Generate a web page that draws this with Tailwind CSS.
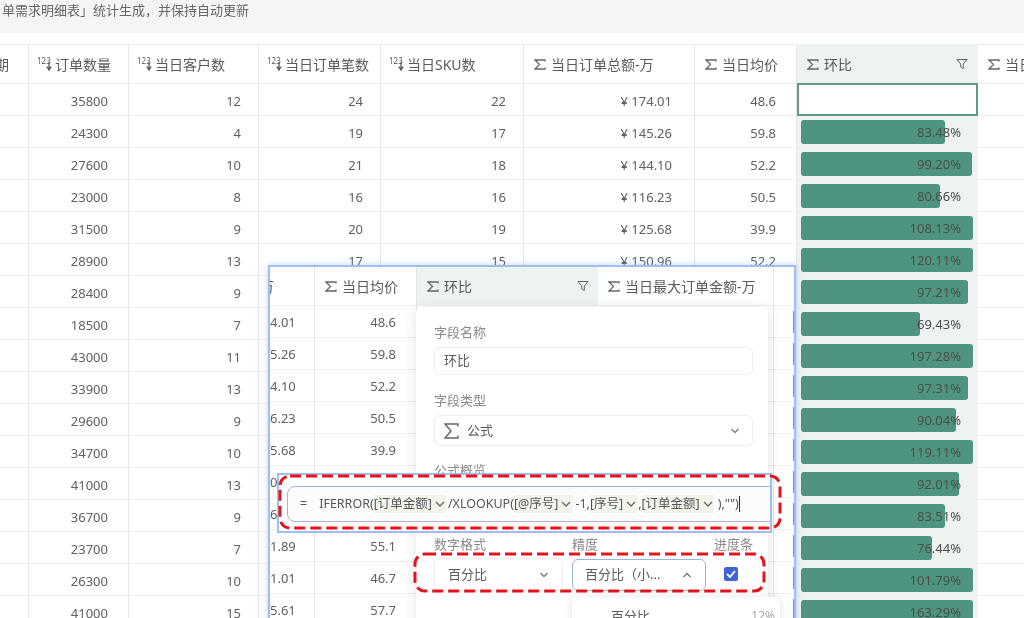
<!DOCTYPE html>
<html lang="zh-CN">
<head>
    <meta charset="UTF-8">
    <title>环比</title>
    <script src="https://cdn.jsdelivr.net/npm/@tailwindcss/browser@4"></script>
</head>
<body class="bg-white">
<div class="relative w-[1024px] h-[618px] overflow-hidden bg-white text-[13px] text-[#5f6160] blur-[0.35px] font-['Noto_Sans','Noto_Sans_CJK_SC',sans-serif]">

    <div class="h-[33px] bg-[#f5f5f5] pl-[2px] pt-[1px] text-[13px] text-[#666666] whitespace-nowrap">单需求明细表」统计生成，并保持自动更新</div>
    <div class="h-[11px] bg-white"></div>

    <!-- main table -->
    <div class="grid grid-cols-[29px_100px_130px_122px_143px_171px_102px_181px_46px] h-[40px] border-y border-[#eeeeee] text-[14px] text-[#5a5a5a]">
        <div class="flex items-center overflow-hidden border-r border-[#e6e6e6]"><span class="-ml-[5px]">期</span></div>
        <div class="flex items-center pl-[8px] border-r border-[#e6e6e6]"><span class="relative w-[18px] h-[14px] text-[8px] leading-[8px]">123<svg class="absolute left-[9px] top-[5px]" width="6" height="9" viewBox="0 0 6 9"><path d="M3 0v7M.8 4.500L3 8l2.200-3.500" fill="none" stroke="#555" stroke-width="1.300"/></svg></span><span>订单数量</span></div>
        <div class="flex items-center pl-[8px] border-r border-[#e6e6e6]"><span class="relative w-[18px] h-[14px] text-[8px] leading-[8px]">123<svg class="absolute left-[9px] top-[5px]" width="6" height="9" viewBox="0 0 6 9"><path d="M3 0v7M.8 4.500L3 8l2.200-3.500" fill="none" stroke="#555" stroke-width="1.300"/></svg></span><span>当日客户数</span></div>
        <div class="flex items-center pl-[8px] border-r border-[#e6e6e6]"><span class="relative w-[18px] h-[14px] text-[8px] leading-[8px]">123<svg class="absolute left-[9px] top-[5px]" width="6" height="9" viewBox="0 0 6 9"><path d="M3 0v7M.8 4.500L3 8l2.200-3.500" fill="none" stroke="#555" stroke-width="1.300"/></svg></span><span>当日订单笔数</span></div>
        <div class="flex items-center pl-[8px] border-r border-[#e6e6e6]"><span class="relative w-[18px] h-[14px] text-[8px] leading-[8px]">123<svg class="absolute left-[9px] top-[5px]" width="6" height="9" viewBox="0 0 6 9"><path d="M3 0v7M.8 4.500L3 8l2.200-3.500" fill="none" stroke="#555" stroke-width="1.300"/></svg></span><span>当日SKU数</span></div>
        <div class="flex items-center gap-[5px] pl-[10px] border-r border-[#e6e6e6]"><svg width="12" height="11" viewBox="0 0 12 11"><path d="M11 2.500V1H1l4.500 4.500L1 10h10V8.500" fill="none" stroke="#666" stroke-width="1.300"/></svg><span>当日订单总额-万</span></div>
        <div class="flex items-center gap-[5px] pl-[10px] border-r border-[#e6e6e6]"><svg width="12" height="11" viewBox="0 0 12 11"><path d="M11 2.500V1H1l4.500 4.500L1 10h10V8.500" fill="none" stroke="#666" stroke-width="1.300"/></svg><span>当日均价</span></div>
        <div class="flex items-center gap-[5px] pl-[10px] bg-[#ecf3f0] relative"><svg width="12" height="11" viewBox="0 0 12 11"><path d="M11 2.500V1H1l4.500 4.500L1 10h10V8.500" fill="none" stroke="#666" stroke-width="1.300"/></svg><span>环比</span>
            <svg class="absolute right-[10px] top-[13px]" width="12" height="12" viewBox="0 0 12 12"><path d="M1 1.500h10L7.300 6v4.500L4.700 9V6z" fill="none" stroke="#666" stroke-width="1"/></svg>
        </div>
        <div class="flex items-center gap-[5px] pl-[10px] whitespace-nowrap overflow-hidden"><svg class="shrink-0" width="12" height="11" viewBox="0 0 12 11"><path d="M11 2.500V1H1l4.500 4.500L1 10h10V8.500" fill="none" stroke="#666" stroke-width="1.300"/></svg><span>当日最大</span></div>
    </div>
    <div id="rows"></div>

    <!-- column editor window laid over the table -->
    <div class="absolute left-[268px] top-[265px] w-[528px] h-[360px] bg-white border-2 border-[#9cc0f5] shadow-[0_0_6px_rgba(120,160,230,0.45)] overflow-hidden">
        <div class="grid grid-cols-[45px_102px_181px_176px_21px] h-[39px] border-b border-[#eeeeee] text-[14px] text-[#5a5a5a]">
            <div class="flex items-center overflow-hidden border-r border-[#e6e6e6] whitespace-nowrap"><span class="-ml-[10px]">万</span></div>
            <div class="flex items-center gap-[5px] pl-[10px] border-r border-[#e6e6e6]"><svg width="12" height="11" viewBox="0 0 12 11"><path d="M11 2.500V1H1l4.500 4.500L1 10h10V8.500" fill="none" stroke="#666" stroke-width="1.300"/></svg><span>当日均价</span></div>
            <div class="flex items-center gap-[5px] pl-[10px] bg-[#ecf3f0] relative"><svg width="12" height="11" viewBox="0 0 12 11"><path d="M11 2.500V1H1l4.500 4.500L1 10h10V8.500" fill="none" stroke="#666" stroke-width="1.300"/></svg><span>环比</span>
                <svg class="absolute right-[9px] top-[13px]" width="12" height="12" viewBox="0 0 12 12"><path d="M1 1.500h10L7.300 6v4.500L4.700 9V6z" fill="none" stroke="#666" stroke-width="1"/></svg>
            </div>
            <div class="flex items-center gap-[5px] pl-[10px] border-r border-[#e6e6e6] whitespace-nowrap"><svg class="shrink-0" width="12" height="11" viewBox="0 0 12 11"><path d="M11 2.500V1H1l4.500 4.500L1 10h10V8.500" fill="none" stroke="#666" stroke-width="1.300"/></svg><span>当日最大订单金额-万</span></div>
            <div></div>
        </div>
        <div id="mini"></div>
    </div>

    <!-- field popover -->
    <div class="absolute left-[416px] top-[307px] w-[352px] h-[330px] bg-white rounded-[6px] shadow-[0_2px_14px_rgba(0,0,0,0.12)] px-[18px] pt-[17px]">
        <div class="text-[13px] leading-[16px] text-[#8a8a8a]">字段名称</div>
        <div class="mt-[7px] h-[28px] w-[319px] border border-[#eeeeee] rounded-[6px] flex items-center pl-[9px] text-[13px] text-[#5a5a5a]">环比</div>
        <div class="mt-[17px] text-[13px] leading-[16px] text-[#8a8a8a]">字段类型</div>
        <div class="mt-[7px] h-[31px] w-[319px] border border-[#eeeeee] rounded-[6px] flex items-center pl-[9px] pr-[12px] text-[13px] text-[#5a5a5a]">
            <svg width="15" height="16" viewBox="0 0 15 16"><path d="M14 3.500V1H1l6 7-6 7h13v-2.500" fill="none" stroke="#666" stroke-width="1.400"/></svg><span class="ml-[8px]">公式</span>
            <svg class="ml-auto" width="10" height="6" viewBox="0 0 10 6"><path d="M1.500 1l3.500 3.500L8.500 1" fill="none" stroke="#777" stroke-width="1.300"/></svg>
        </div>
        <div class="mt-[16px] text-[13px] leading-[16px] text-[#8a8a8a]">公式概览</div>
    </div>

    <!-- formula bar -->
    <div class="absolute left-[277px] top-[473px] w-[495px] h-[60px] bg-white border-2 border-[#9cc0f5] overflow-hidden pl-[8px] pt-[11px]">
        <div class="w-[520px] h-[36px] border border-[#9fb4dc] rounded-[8px] bg-[#fbfcfb] flex items-center pl-[12px] text-[12.5px] text-[#555555] whitespace-nowrap">
            <span class="mr-[12px]">=</span>
            <span>IFERROR(</span>
            <span class="flex items-center bg-[#f1f6ed] pr-[1px]">[订单金额]<svg class="ml-[3px]" width="10" height="6" viewBox="0 0 10 6"><path d="M1 1l4 4 4-4" fill="none" stroke="#666" stroke-width="1.300"/></svg></span>
            <span class="ml-[2px]">/XLOOKUP(</span>
            <span class="flex items-center bg-[#f1f6ed] pr-[1px]">[@序号]<svg class="ml-[3px]" width="10" height="6" viewBox="0 0 10 6"><path d="M1 1l4 4 4-4" fill="none" stroke="#666" stroke-width="1.300"/></svg></span>
            <span class="ml-[3px]">-1,</span>
            <span class="flex items-center bg-[#f1f6ed] pr-[1px]">[序号]<svg class="ml-[3px]" width="10" height="6" viewBox="0 0 10 6"><path d="M1 1l4 4 4-4" fill="none" stroke="#666" stroke-width="1.300"/></svg></span>
            <span class="ml-[1px]">,</span>
            <span class="flex items-center bg-[#f1f6ed] pr-[1px]">[订单金额]<svg class="ml-[3px]" width="10" height="6" viewBox="0 0 10 6"><path d="M1 1l4 4 4-4" fill="none" stroke="#666" stroke-width="1.300"/></svg></span>
            <span class="ml-[4px]">),"")</span>
            <span class="w-[1px] h-[16px] bg-[#333333]"></span>
        </div>
    </div>
    <svg class="absolute left-[278px] top-[474px]" width="504" height="56" viewBox="0 0 504 56"><rect x="2" y="2" width="500" height="52" rx="10" fill="none" stroke="#e4141a" stroke-width="3" stroke-dasharray="11 5"/></svg>

    <!-- number format row -->
    <div class="absolute left-[434px] top-[536px] w-[330px] h-[16px] text-[13px] leading-[16px] text-[#8a8a8a]">
        <span class="absolute left-0">数字格式</span><span class="absolute left-[138px]">精度</span><span class="absolute left-[280px]">进度条</span>
    </div>
    <div class="absolute left-[434px] top-[558px] flex items-center text-[13px] text-[#5a5a5a]">
        <div class="w-[129px] h-[33px] border border-[#eeeeee] rounded-[6px] flex items-center pl-[13px] pr-[13px]">百分比
            <svg class="ml-auto" width="10" height="6" viewBox="0 0 10 6"><path d="M1.500 1l3.500 3.500L8.500 1" fill="none" stroke="#777" stroke-width="1.300"/></svg>
        </div>
        <div class="ml-[9px] w-[134px] h-[32px] border border-[#9fb4dc] rounded-[6px] flex items-center pl-[12px] pr-[13px] whitespace-nowrap">百分比（小...
            <svg class="ml-auto" width="10" height="6" viewBox="0 0 10 6"><path d="M1.500 5L5 1.500 8.500 5" fill="none" stroke="#777" stroke-width="1.300"/></svg>
        </div>
        <div class="ml-[18px] -mt-[1px] w-[14px] h-[14px] rounded-[2px] bg-[#3f63d2] flex items-center justify-center">
            <svg width="10" height="8" viewBox="0 0 10 8"><path d="M1 4l3 3 5-6" fill="none" stroke="#fff" stroke-width="1.800"/></svg>
        </div>
    </div>
    <svg class="absolute left-[413px] top-[552px]" width="353" height="41" viewBox="0 0 353 41"><rect x="2" y="2" width="349" height="37" rx="10" fill="none" stroke="#e4141a" stroke-width="3" stroke-dasharray="11 5"/></svg>

    <!-- precision dropdown -->
    <div class="absolute left-[572px] top-[597px] w-[208px] h-[45px] bg-white rounded-[6px] shadow-[0_1px_8px_rgba(0,0,0,0.12)] flex pl-[39px] pr-[5px] pt-[10px] text-[13px] text-[#5a5a5a]">
        <span>百分比</span><span class="ml-auto text-[12px] text-[#a8a8a8]">12%</span>
    </div>
</div>

<script>
    const order = [35800, 24300, 27600, 23000, 31500, 28900, 28400, 18500, 43000, 33900, 29600, 34700, 41000, 36700, 23700, 26300, 41000];
    const customers = [12, 4, 10, 8, 9, 13, 9, 7, 11, 13, 9, 10, 13, 9, 7, 10, 15];
    const bills = [24, 19, 21, 16, 20, 17];
    const sku = [22, 17, 18, 16, 19, 15];
    const total = ['174.01', '145.26', '144.10', '116.23', '125.68', '150.96'];
    const avg = ['48.6', '59.8', '52.2', '50.5', '39.9', '52.2'];
    const ratio = [null, 83.48, 99.20, 80.66, 108.13, 120.11, 97.21, 69.43, 197.28, 97.31, 90.04, 119.11, 92.01, 83.51, 76.44, 101.79, 163.29];

    let html = '';
    ratio.forEach((r, i) => {
        let barCell = '<div class="bg-white border-2 border-[#5f9c88] h-[33px] -mt-[1px]"></div>';
        if (r !== null) {
            const pct = r.toFixed(2) + '%';
            barCell = `<div class="relative bg-[#eef3f1] flex items-center justify-end pr-[17px] pt-[3px] text-[#4a4f4d]">
                <div class="absolute left-[4px] top-[4px] h-[24px] w-[172px]"><div class="h-full rounded-[3px] bg-[#4f9480]" style="width:${Math.min(r, 100)}%"></div></div>
                <span class="relative">${pct}</span></div>`;
        }
        html += `<div class="grid grid-cols-[29px_100px_130px_122px_143px_171px_102px_181px_46px] h-[32px] border-b border-[#eeeeee]">
            <div class="border-r border-[#e6e6e6]"></div>
            <div class="border-r border-[#e6e6e6] flex items-center justify-end pr-[20px] pt-[4px]">${order[i]}</div>
            <div class="border-r border-[#e6e6e6] flex items-center justify-end pr-[17px] pt-[4px]">${customers[i]}</div>
            <div class="border-r border-[#e6e6e6] flex items-center justify-end pr-[17px] pt-[4px]">${bills[i] ?? ''}</div>
            <div class="border-r border-[#e6e6e6] flex items-center justify-end pr-[17px] pt-[4px]">${sku[i] ?? ''}</div>
            <div class="border-r border-[#e6e6e6] flex items-center justify-end pr-[22px] pt-[4px]">${total[i] ? '¥ ' + total[i] : ''}</div>
            <div class="border-r border-[#e6e6e6] flex items-center justify-end pr-[20px] pt-[4px]">${avg[i] ?? ''}</div>
            ${barCell}
            <div></div>
        </div>`;
    });
    document.getElementById('rows').innerHTML = html;

    // clipped left column + avg column of the editor window
    const miniLeft = ['4.01', '5.26', '4.10', '6.23', '5.68', '0.', '6.', '1.89', '1.01', '5.61'];
    const miniAvg = ['48.6', '59.8', '52.2', '50.5', '39.9', '', '', '55.1', '46.7', '57.7'];
    document.getElementById('mini').innerHTML = miniLeft.map((v, i) => `<div class="grid grid-cols-[45px_102px_181px_176px_21px] h-[32px] border-b border-[#eeeeee]">
        <div class="border-r border-[#e6e6e6] flex items-center pt-[2px] whitespace-nowrap">${v}</div>
        <div class="border-r border-[#e6e6e6] flex items-center justify-end pr-[20px] pt-[2px]">${miniAvg[i]}</div>
        <div></div>
        <div class="border-r border-[#e6e6e6]"></div>
        <div class="flex justify-end items-center"><div class="w-[2px] h-[22px] bg-[#6f97b8]"></div></div>
    </div>`).join('');
</script>
</body>
</html>
